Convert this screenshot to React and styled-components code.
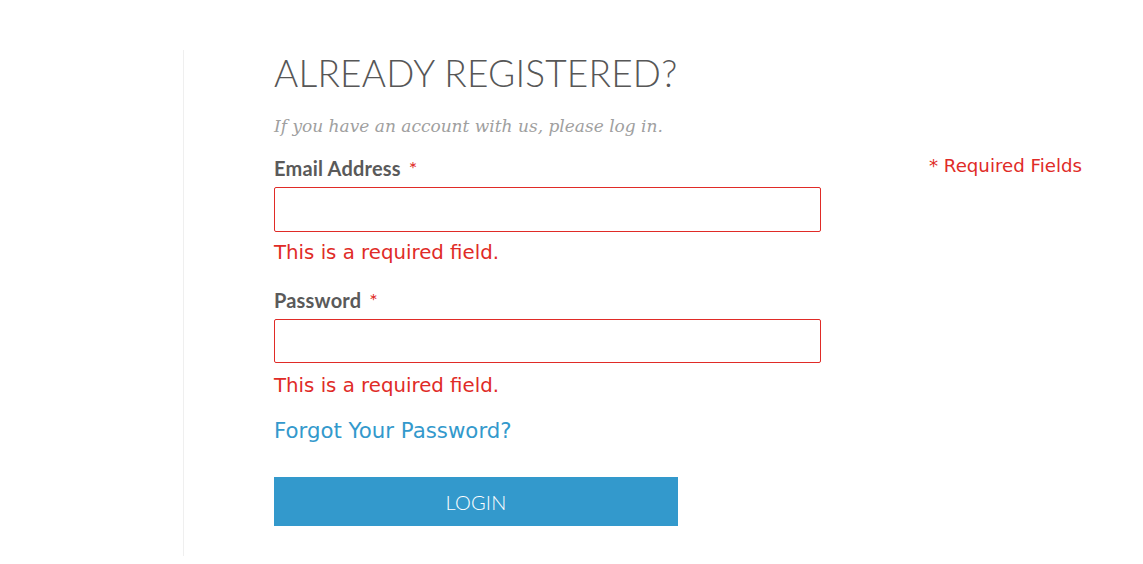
import React from "react";
import styled, { createGlobalStyle } from "styled-components";

const Global = createGlobalStyle`
  html, body { margin: 0; padding: 0; background: #fff; }
  * { box-sizing: border-box; }
`;

const Page = styled.div`
  display: flex;
  width: 1143px;
  height: 564px;
  padding-top: 50px;
`;

const Sidebar = styled.div`
  width: 184px;
  height: 506px;
  border-right: 1px solid #efefef;
  flex-shrink: 0;
`;

const Main = styled.div`
  flex: 1;
  display: flex;
  padding-left: 90px;
  padding-right: 61px;
`;

const Form = styled.form`
  width: 547px;
  display: flex;
  flex-direction: column;
`;

const Title = styled.h2`
  margin: 0;
  font-family: "Lato", sans-serif;
  font-weight: 300;
  font-size: 37px;
  line-height: 46px;
  color: #575757;
  letter-spacing: 0.2px;
`;

const Intro = styled.p`
  margin: 19px 0 0;
  font-family: "DejaVu Serif", "Liberation Serif", serif;
  font-style: italic;
  font-size: 17px;
  line-height: 22px;
  color: #a0a0a0;
`;

const Label = styled.label`
  display: block;
  margin-top: ${(p) => p.$top}px;
  font-family: "Lato", sans-serif;
  font-weight: 700;
  font-size: 20px;
  line-height: 24px;
  color: #5a5a5a;
  letter-spacing: 0.2px;
`;

const Star = styled.span`
  color: #e02b27;
  margin-left: 8px;
  font-weight: 400;
`;

const Input = styled.input`
  display: block;
  width: 547px;
  height: ${(p) => p.$h}px;
  margin-top: 7px;
  border: 1px solid #e02b27;
  border-radius: 2px;
  background: #fff;
  outline: none;
`;

const Error = styled.div`
  margin-top: ${(p) => p.$top}px;
  font-family: "DejaVu Sans", Verdana, sans-serif;
  font-size: 19.75px;
  line-height: 24px;
  color: #e02b27;
`;

const Forgot = styled.a`
  margin-top: 20px;
  font-family: "DejaVu Sans", Verdana, sans-serif;
  font-size: 21.3px;
  line-height: 26px;
  color: #3399cc;
  text-decoration: none;
`;

const Button = styled.button`
  width: 404px;
  height: 49px;
  margin-top: 33px;
  border: none;
  background: #3399cc;
  color: #fff;
  font-family: "Lato", sans-serif;
  font-weight: 300;
  font-size: 20px;
  letter-spacing: 0.2px;
`;

const Note = styled.div`
  margin-left: auto;
  margin-top: 105px;
  font-family: "DejaVu Sans", Verdana, sans-serif;
  font-size: 18.2px;
  line-height: 22px;
  color: #e02b27;
  white-space: nowrap;
`;

export default function App() {
  return (
    <>
      <Global />
      <Page>
        <Sidebar />
        <Main>
          <Form onSubmit={(e) => e.preventDefault()}>
            <Title>ALREADY REGISTERED?</Title>
            <Intro>If you have an account with us, please log in.</Intro>
            <Label $top={19}>
              Email Address<Star>*</Star>
            </Label>
            <Input type="email" $h={45} />
            <Error $top={9}>This is a required field.</Error>
            <Label $top={23}>
              Password<Star>*</Star>
            </Label>
            <Input type="password" $h={44} />
            <Error $top={11}>This is a required field.</Error>
            <Forgot href="#">Forgot Your Password?</Forgot>
            <Button type="submit">LOGIN</Button>
          </Form>
          <Note>* Required Fields</Note>
        </Main>
      </Page>
    </>
  );
}
